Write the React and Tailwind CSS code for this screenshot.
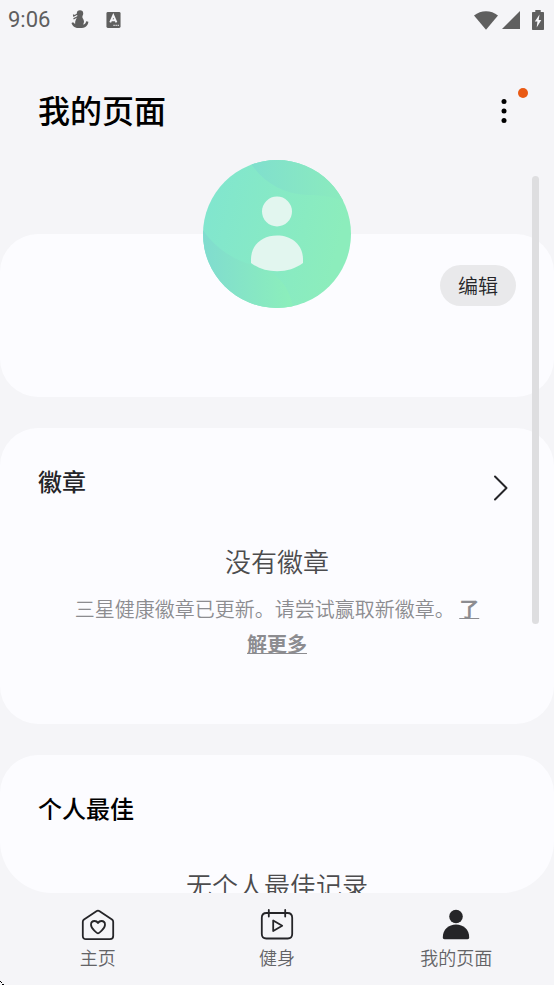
const TABS = [
  { label: '主页', href: '#home', Icon: HomeIcon },
  { label: '健身', href: '#fitness', Icon: FitnessIcon },
  { label: '我的页面', href: '#me', Icon: PersonIcon, active: true },
];

function HomeIcon() {
  return (
    <svg width="34" height="32" viewBox="0 0 34 32" fill="none" stroke="#252528" strokeWidth="1.8" strokeLinejoin="round" aria-hidden="true">
      <path d="M1.800 12.800c0-1 .4-1.700 1.200-2.300L15.400 2.200c1-.7 2.200-.7 3.200 0L31 10.500c.8.600 1.200 1.300 1.200 2.300V27c0 2-1.200 3.200-3.200 3.200H5C3 30.200 1.800 29 1.800 27V12.800Z" />
      <path d="M17 24.400c-.4 0-7-4.500-7-8.700 0-2.200 1.600-3.700 3.600-3.700 1.500 0 2.700.8 3.400 2 .7-1.200 1.900-2 3.400-2 2 0 3.600 1.500 3.600 3.700 0 4.200-6.600 8.700-7 8.700Z" />
    </svg>
  );
}

function FitnessIcon() {
  return (
    <svg width="34" height="32" viewBox="0 0 34 32" fill="none" stroke="#252528" strokeWidth="1.8" strokeLinecap="round" strokeLinejoin="round" aria-hidden="true">
      <path d="M6.500 4h21c3.100 0 4.700 1.600 4.700 4.700V25c0 3-1.500 4.500-4.500 4.500H6.300c-3 0-4.500-1.500-4.500-4.500V8.700C1.800 5.600 3.400 4 6.500 4Z" />
      <path d="M8.800 1v6.500M25.200 1v6.500" />
      <path d="M13.200 11.500V22l9-5.200-9-5.300Z" />
    </svg>
  );
}

function PersonIcon() {
  return (
    <svg width="34" height="32" viewBox="0 0 34 32" fill="#252528" aria-hidden="true">
      <circle cx="17" cy="7.500" r="6.800" />
      <path d="M3.800 28.500C3.800 20.600 9.600 15.600 17 15.600s13.200 5 13.200 12.900c0 1.100-.6 1.700-1.700 1.700h-23c-1.100 0-1.700-.6-1.700-1.700Z" />
    </svg>
  );
}

function Avatar() {
  return (
    <svg className="size-37" viewBox="0 0 148 148" role="img" aria-label="头像">
      <defs>
        <clipPath id="disc">
          <circle cx="74" cy="74" r="74" />
        </clipPath>
        <linearGradient id="base" x1="0" y1="0" x2="1" y2="0.25">
          <stop offset="0" stopColor="#80e5d0" />
          <stop offset="1" stopColor="#8cedbc" />
        </linearGradient>
        <linearGradient id="top" x1="0" y1="0" x2="1" y2="0">
          <stop offset="0" stopColor="#80dfce" />
          <stop offset="1" stopColor="#8cecbc" />
        </linearGradient>
        <linearGradient id="low" x1="0" y1="0" x2="1" y2="0">
          <stop offset="0" stopColor="#80dccf" />
          <stop offset="1" stopColor="#8cefbb" />
        </linearGradient>
      </defs>
      <g clipPath="url(#disc)">
        <rect width="148" height="148" fill="url(#base)" />
        <path d="M46 0C58 22 80 34 104 35c16 0 30 2 44 10V0Z" fill="url(#top)" />
        <path d="M0 70c12 18 32 31 50 35 20 4 36 18 40 43H0Z" fill="url(#low)" />
      </g>
      <circle cx="74" cy="51.500" r="15" fill="#e2f6ef" />
      <path d="M48 99.500C48 85 59 75.500 74 75.500s26 9.500 26 24v3.500c-7.500 5.500-16 8.200-26 8.200S55.500 108.500 48 103Z" fill="#e2f6ef" />
    </svg>
  );
}

function StatusBar() {
  return (
    <div className="flex h-10 shrink-0 items-center justify-between pr-2.5 pl-2 text-[#5f5f5f]">
      <div className="flex items-center">
        <span className="w-15.5 font-['Roboto',sans-serif] text-[22px] leading-6">9:06</span>
        <svg width="20" height="20" viewBox="0 0 20 20" fill="currentColor" aria-hidden="true">
          <circle cx="10" cy="3.500" r="3.200" />
          <path d="M7.500 6h5c-.8 2 1.500 3 1.500 5.500 0 1.300-.4 2.300-1 3 2 0 2.800-1.200 3.200-3.200l2.200.4c-.5 4-3 6.400-8.400 6.400-4.500 0-7.500-1.600-8.500-5.200l1.600-.6 2 1.700c-.3-3.500 1.500-5 2.400-8Z" />
          <path d="M8.500 3.500 3.800 6l-.3-1.500M8 6.500 3.500 8.800" fill="none" stroke="currentColor" strokeWidth="1.300" />
        </svg>
        <svg className="ml-4" width="15" height="16" viewBox="0 0 15 17" aria-hidden="true">
          <rect width="15" height="17" rx="1.500" fill="currentColor" />
          <path d="m4 11 3.300-7.500L10.600 11M5.200 8.800h4.200" fill="none" stroke="#f5f5f8" strokeWidth="2" />
          <path d="M7.500 14.300h1.200m1 0h1.200m1 0h1.200" stroke="#f5f5f8" strokeWidth="1.300" />
        </svg>
      </div>
      <div className="flex items-center">
        <svg width="24" height="19" viewBox="0 0 24 19" fill="currentColor" aria-hidden="true">
          <path d="M0 4.500C7-1.200 17-1.200 24 4.500L12 18.700Z" />
        </svg>
        <svg className="ml-1" width="18" height="18" viewBox="0 0 17 17" fill="currentColor" aria-hidden="true">
          <path d="M17 0v17H0Z" />
        </svg>
        <svg className="ml-3" width="12" height="20" viewBox="0 0 12 20" aria-hidden="true">
          <path d="M3.300 0h5.400v2H11c.6 0 1 .4 1 1v16c0 .6-.4 1-1 1H1c-.6 0-1-.4-1-1V3c0-.6.4-1 1-1h2.300Z" fill="currentColor" />
          <path d="M7.500 4.500 2.800 11.500h2.600l-.7 6 4.600-7.500H6.700Z" fill="#f5f5f8" />
        </svg>
      </div>
    </div>
  );
}

export default function App() {
  return (
    <div className="relative flex h-screen flex-col overflow-hidden bg-[#f5f5f8] font-['Noto_Sans_CJK_SC',sans-serif]">
      <StatusBar />

      <header className="flex shrink-0 items-start justify-between px-9.5 pt-12 pb-6">
        <h1 className="text-[32px] leading-[42px] font-medium text-black">我的页面</h1>
        <button type="button" aria-label="更多选项" className="relative flex h-12 w-6 items-center justify-center">
          <svg width="6" height="26" viewBox="0 0 6 26" aria-hidden="true">
            <circle cx="3" cy="2.500" r="2.500" />
            <circle cx="3" cy="12" r="2.500" />
            <circle cx="3" cy="21.500" r="2.500" />
          </svg>
          <span className="absolute top-0 -right-3 size-2.5 rounded-full bg-[#e95a14]" />
        </button>
      </header>

      <div className="relative flex min-h-0 flex-1 flex-col">
        <main className="flex min-h-0 flex-1 flex-col gap-[31px] overflow-hidden rounded-b-[52px]">
          <section className="shrink-0">
            <div className="relative z-10 flex justify-center">
              <Avatar />
            </div>
            <div className="-mt-18.5 flex h-[163px] items-start justify-end rounded-[38px] bg-[#fcfcff] px-9.5 pt-[31px]">
              <button type="button" className="rounded-full bg-[#e9e9eb] px-4.5 text-[20px] leading-[41px] font-[350] text-[#252528]">
                编辑
              </button>
            </div>
          </section>

          <section className="h-74 shrink-0 rounded-[38px] bg-[#fcfcff] px-9.5 pt-[35px]">
            <div className="flex items-start justify-between">
              <h2 className="text-[24px] leading-9 font-medium text-[#252528]">徽章</h2>
              <button type="button" aria-label="查看徽章" className="mt-3 mr-[7px]">
                <svg width="16" height="26" viewBox="0 0 16 26" fill="none" stroke="#252528" strokeWidth="2" strokeLinecap="round" strokeLinejoin="round" aria-hidden="true">
                  <path d="m2 1.500 11.500 11.500L2 24.500" />
                </svg>
              </button>
            </div>
            <div className="px-9 pt-10 text-center">
              <p className="text-[26px] leading-10 font-[350] text-[#4c4c4e]">没有徽章</p>
              <p className="pt-2.5 text-[20px] leading-[35px] font-[350] text-[#8c8c90]">
                三星健康徽章已更新。请尝试赢取新徽章。{' '}
                <a href="#learn-more" className="font-bold underline decoration-1">
                  了解更多
                </a>
              </p>
            </div>
          </section>

          <section className="shrink-0 rounded-t-[38px] bg-[#fcfcff] px-9.5 pt-[35px] pb-20">
            <h2 className="text-[24px] leading-9 font-medium text-black">个人最佳</h2>
            <p className="pt-[39px] text-center text-[26px] leading-10 font-[350] text-[#4c4c4e]">无个人最佳记录</p>
          </section>
        </main>
        {/* scroll thumb */}
        <div className="absolute top-4 right-[15px] h-112 w-[7px] rounded-full bg-[#dedee0]" />
      </div>

      <nav className="grid shrink-0 grid-cols-3 px-2 pt-4 pb-3.5">
        {TABS.map(({ label, href, Icon, active }) => (
          <a
            key={label}
            href={href}
            aria-current={active ? 'page' : undefined}
            className="flex flex-col items-center gap-0.5 text-[18px] leading-7 font-[350] text-[#636366]"
          >
            <Icon />
            {label}
          </a>
        ))}
      </nav>

      <svg className="absolute bottom-0 left-0" width="4" height="4" viewBox="0 0 4 4" aria-hidden="true">
        <path d="M0 0h1v1H0ZM1 1h1v1H1ZM2 3h2v1H2Z" />
      </svg>
    </div>
  );
}
